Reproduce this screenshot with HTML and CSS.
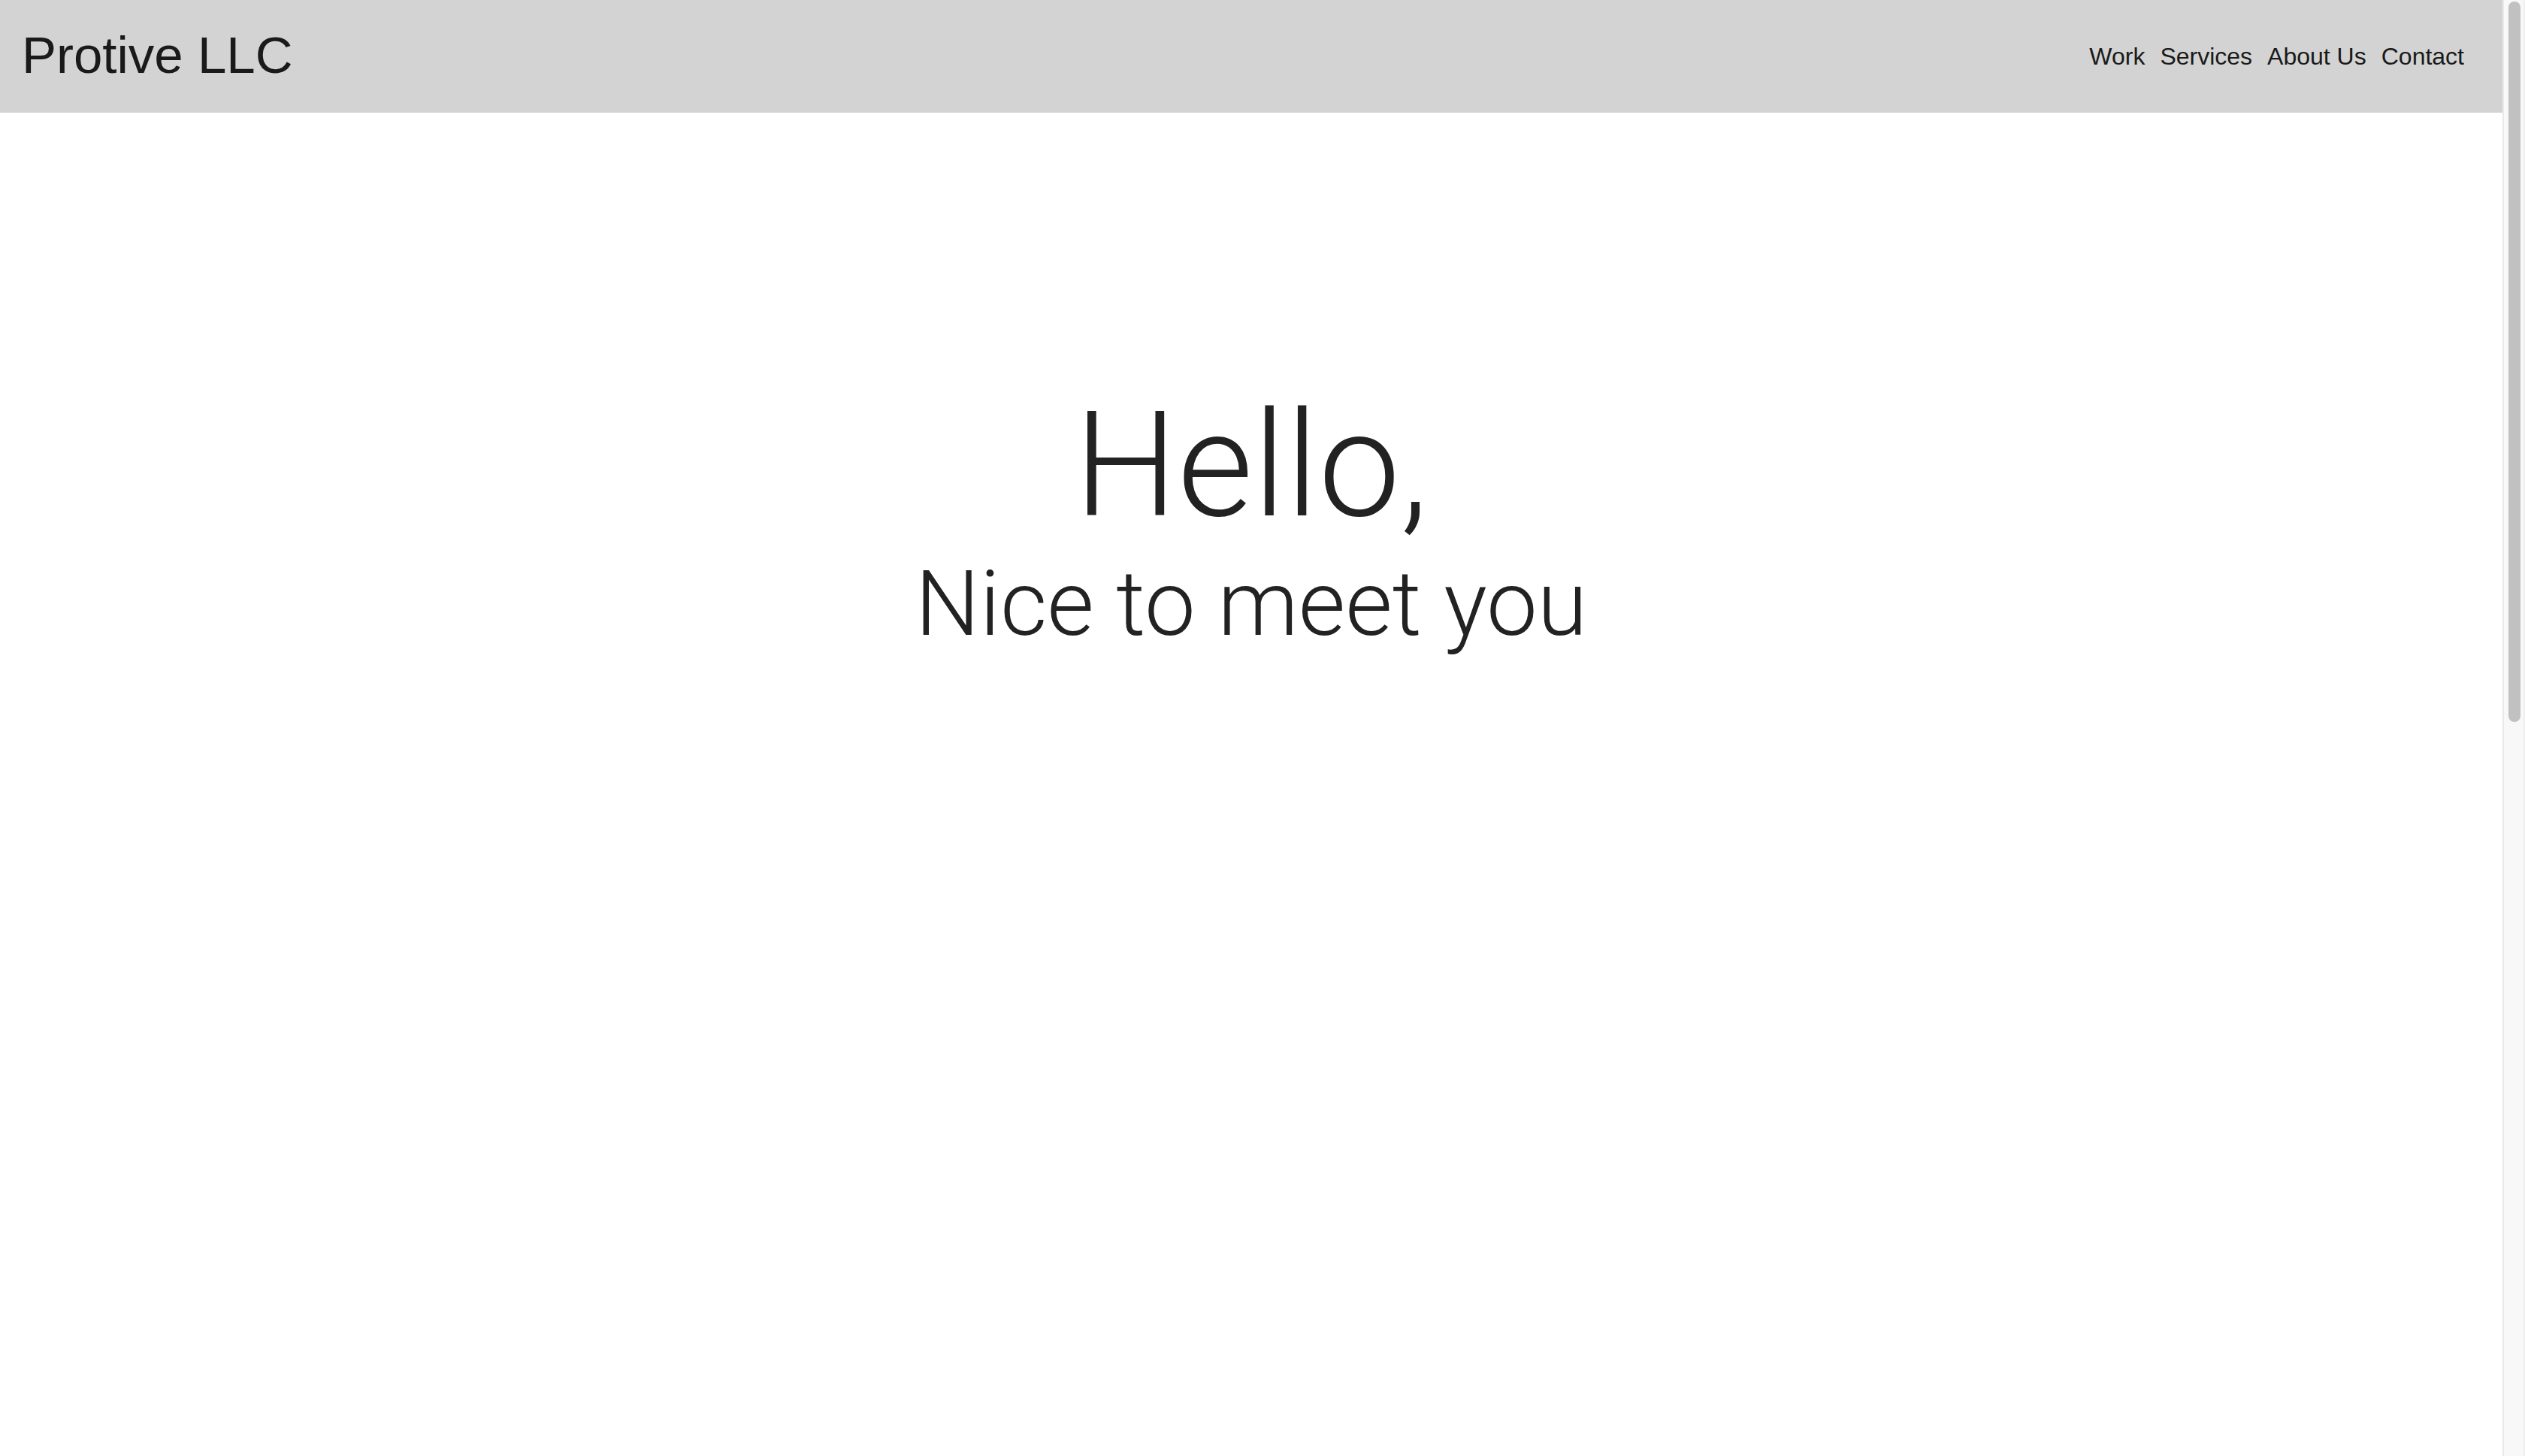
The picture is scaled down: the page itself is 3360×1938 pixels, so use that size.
FILE: index.html
```html
<!DOCTYPE html>
<html lang="en">
<head>
<meta charset="utf-8">
<title>Protive LLC</title>
<link rel="stylesheet" href="styles.css">
</head>
<body>
<div class="window">
  <div class="page">
    <header class="site-header">
      <div class="logo">Protive LLC</div>
      <nav class="nav">
        <a class="nav-link" href="#">Work</a>
        <a class="nav-link" href="#">Services</a>
        <a class="nav-link" href="#">About Us</a>
        <a class="nav-link" href="#">Contact</a>
      </nav>
    </header>
    <main class="hero">
      <h1 class="hero-title">Hello,</h1>
      <h2 class="hero-subtitle">Nice to meet you</h2>
    </main>
  </div>
  <div class="scrollbar" aria-hidden="true">
    <div class="scrollbar-thumb"></div>
  </div>
</div>
</body>
</html>
```
FILE: styles.css
```css
html, body {
  margin: 0;
  padding: 0;
  height: 100%;
  overflow: hidden;
}
body {
  font-family: "Liberation Sans", Arial, sans-serif;
  color: #1c1c1c;
  background: #ffffff;
}
.window {
  display: flex;
  height: 100vh;
}
.page {
  flex: 1;
  min-width: 0;
  display: flex;
  flex-direction: column;
}
.scrollbar {
  width: 30px;
  flex: none;
  box-sizing: border-box;
  background: #f8f8f8;
  border-left: 2px solid #e9e9e9;
  border-right: 2px solid #efefef;
  padding: 2px 4px 0 6px;
}
.scrollbar-thumb {
  height: 959px;
  width: 16px;
  border-radius: 8px;
  background: #c1c1c1;
}
.site-header {
  height: 150px;
  flex: none;
  background: #d3d3d3;
  display: flex;
  align-items: center;
  justify-content: space-between;
  padding: 0 51px 0 29px;
  box-sizing: border-box;
}
.logo {
  font-size: 69px;
  line-height: 1;
  color: #1a1a1a;
  padding-bottom: 4px;
}
.nav {
  display: flex;
  gap: 20px;
}
.nav-link {
  font-size: 32px;
  color: #1a1a1a;
  text-decoration: none;
}
.hero {
  flex: 1;
  padding-top: 373px;
  box-sizing: border-box;
  display: flex;
  flex-direction: column;
  align-items: center;
  font-family: Roboto, "Liberation Sans", sans-serif;
  font-weight: 300;
  color: #222222;
}
.hero-title {
  margin: 0;
  font-size: 194px;
  line-height: 1;
  font-weight: 300;
}
.hero-subtitle {
  margin: 27px 0 0;
  font-size: 121px;
  line-height: 1;
  font-weight: 300;
}
```
